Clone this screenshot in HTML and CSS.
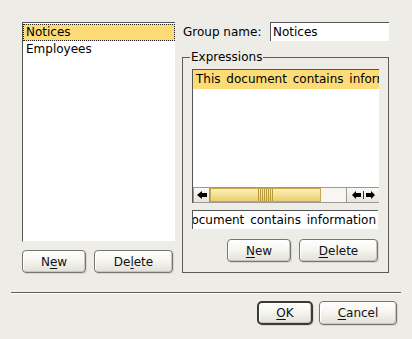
FILE: index.html
```html
<!DOCTYPE html>
<html>
<head>
<meta charset="utf-8">
<link rel="stylesheet" href="styles.css">
</head>
<body>
<div class="dialog">
  <div class="main">
    <div class="left">
      <div class="list groups">
        <div class="row sel focus">Notices</div>
        <div class="row">Employees</div>
      </div>
      <div class="btnrow">
        <button class="btn w64">N<u>e</u>w</button>
        <button class="btn w79">De<u>l</u>ete</button>
      </div>
    </div>
    <div class="right">
      <div class="namerow">
        <span class="lbl">Group name:</span>
        <div class="input name">Notices</div>
      </div>
      <fieldset class="group">
        <legend>Expressions</legend>
        <div class="list exprs">
          <div class="exprbody">
            <div class="row sel wide expt">This document contains information</div>
          </div>
          <div class="hscroll">
            <div class="sbtn">
              <svg width="10" height="8" viewBox="0 0 10 8"><path d="M0 4 L5 0 L5 2 L10 2 L10 6 L5 6 L5 8 Z" fill="#000"/></svg>
            </div>
            <div class="thumb"><div class="grip"></div></div>
            <div class="track"></div>
            <div class="sbtn pair">
              <svg width="9" height="8" viewBox="0 0 9 8"><path d="M0 4 L4 0 L4 2 L9 2 L9 6 L4 6 L4 8 Z" fill="#000"/></svg>
              <span class="bar"></span>
              <svg width="9" height="8" viewBox="0 0 9 8"><path d="M9 4 L5 0 L5 2 L0 2 L0 6 L5 6 L5 8 Z" fill="#000"/></svg>
            </div>
          </div>
        </div>
        <div class="input expr"><span class="expt">This document contains information</span></div>
        <div class="btnrow end">
          <button class="btn w64"><u>N</u>ew</button>
          <button class="btn w79"><u>D</u>elete</button>
        </div>
      </fieldset>
    </div>
  </div>
  <div class="sep"></div>
  <div class="btnrow end bottom">
    <button class="btn ok"><u>O</u>K</button>
    <button class="btn cancel"><u>C</u>ancel</button>
  </div>
</div>
</body>
</html>
```

FILE: styles.css
```css
html, body {
  margin: 0;
  padding: 0;
  background: #edece6;
  width: 412px;
  height: 339px;
  overflow: hidden;
}
body {
  font-family: "DejaVu Sans", sans-serif;
  font-size: 12px;
  color: #000;
}
.dialog {
  display: flex;
  flex-direction: column;
}
.main {
  display: flex;
  padding: 22px 0 0 22px;
}
.left {
  width: 153px;
  display: flex;
  flex-direction: column;
}
.list {
  background: #fff;
  border-top: 1px solid #555;
  border-left: 1px solid #555;
  border-right: 1px solid #edece6;
  border-bottom: 1px solid #edece6;
  box-sizing: border-box;
}
.groups {
  height: 220px;
  padding: 1px 0 0 0;
  border-right: none;
}
.row {
  height: 17px;
  line-height: 17px;
  padding-left: 3px;
  white-space: nowrap;
}
.sel {
  background: #fddc78;
}
.focus {
  outline: 1px dotted #222;
  outline-offset: -1px;
}
.expt {
  word-spacing: 2px;
}
.btnrow {
  display: flex;
  gap: 8px;
  margin-top: 8px;
}
.btnrow.end {
  justify-content: flex-end;
}
.btn {
  font-family: "DejaVu Sans", sans-serif;
  font-size: 12px;
  color: #111;
  height: 23px;
  padding: 0;
  border: 1px solid #77766e;
  border-radius: 4px;
  background: linear-gradient(#ffffff 0%, #f6f5f0 45%, #e2e0d7 100%);
  box-shadow: inset -1px -1px 0 #c8c6bc, inset 1px 1px 0 #fff, 1px 1px 0 #d8d6ce;
  box-sizing: border-box;
}
.btn u {
  text-underline-offset: 2px;
}
.w64 { width: 64px; }
.w79 { width: 79px; }
.right {
  margin-left: 7px;
  width: 207px;
  display: flex;
  flex-direction: column;
}
.namerow {
  display: flex;
  align-items: center;
  height: 19px;
}
.lbl {
  padding-left: 1px;
  width: 87px;
}
.input {
  background: #fff;
  border-top: 1px solid #555;
  border-left: 1px solid #555;
  box-sizing: border-box;
  height: 19px;
  line-height: 18px;
  white-space: nowrap;
  overflow: hidden;
}
.name {
  width: 119px;
  padding-left: 2px;
}
.group {
  margin: 9px 0 0 0;
  width: 207px;
  height: 223px;
  box-sizing: border-box;
  border: 1px solid #5a5a5a;
  padding: 0 9px 0 9px;
  min-width: 0;
}
.group legend {
  padding: 0 1px;
  margin-left: -2px;
  line-height: 14px;
}
.exprs {
  margin-top: 5px;
  width: 187px;
  height: 134px;
  display: flex;
  flex-direction: column;
  overflow: hidden;
  border-right: none;
  border-bottom: none;
}
.exprbody {
  flex: 1;
  overflow: hidden;
}
.exprs .row {
  height: 19px;
  line-height: 19px;
}
.wide {
  width: 320px;
}
.hscroll {
  height: 16px;
  display: flex;
  border: 1px solid #9a9992;
  border-right: none;
  box-sizing: border-box;
  background: #f7f6f1;
}
.sbtn {
  width: 15px;
  display: flex;
  align-items: center;
  justify-content: center;
  background: linear-gradient(#fbfaf7, #e6e4dc);
  border-right: 1px solid #9a9992;
}
.sbtn.pair {
  width: 32px;
  border-right: none;
  border-left: 1px solid #9a9992;
  gap: 2px;
}
.sbtn .bar {
  width: 1px;
  height: 8px;
  background: #333;
}
.thumb {
  width: 111px;
  box-sizing: border-box;
  border: 1px solid #c3a84c;
  background: linear-gradient(#fbeebb, #f3dc8c 60%, #e9cd72);
  display: flex;
  align-items: center;
  justify-content: center;
}
.grip {
  width: 15px;
  height: 12px;
  background: repeating-linear-gradient(90deg, #b89a3a 0 1px, transparent 1px 2px);
}
.track {
  flex: 1;
}
.expr {
  margin-top: 7px;
  width: 186px;
  display: flex;
  justify-content: flex-end;
  padding-right: 2px;
}
.expr span {
  flex: none;
}
.group .btnrow {
  margin-top: 10px;
  margin-right: 1px;
}
.sep {
  margin: 19px 11px 0 11px;
  height: 1px;
  background: #5f5e59;
  border-bottom: 1px solid #fff;
}
.bottom {
  margin-top: 7px;
  margin-right: 15px;
  gap: 6px;
}
.ok {
  width: 56px;
  height: 24px;
  border: 2px solid #3a3a36;
  border-radius: 5px;
}
.cancel {
  width: 78px;
  height: 24px;
}
```
